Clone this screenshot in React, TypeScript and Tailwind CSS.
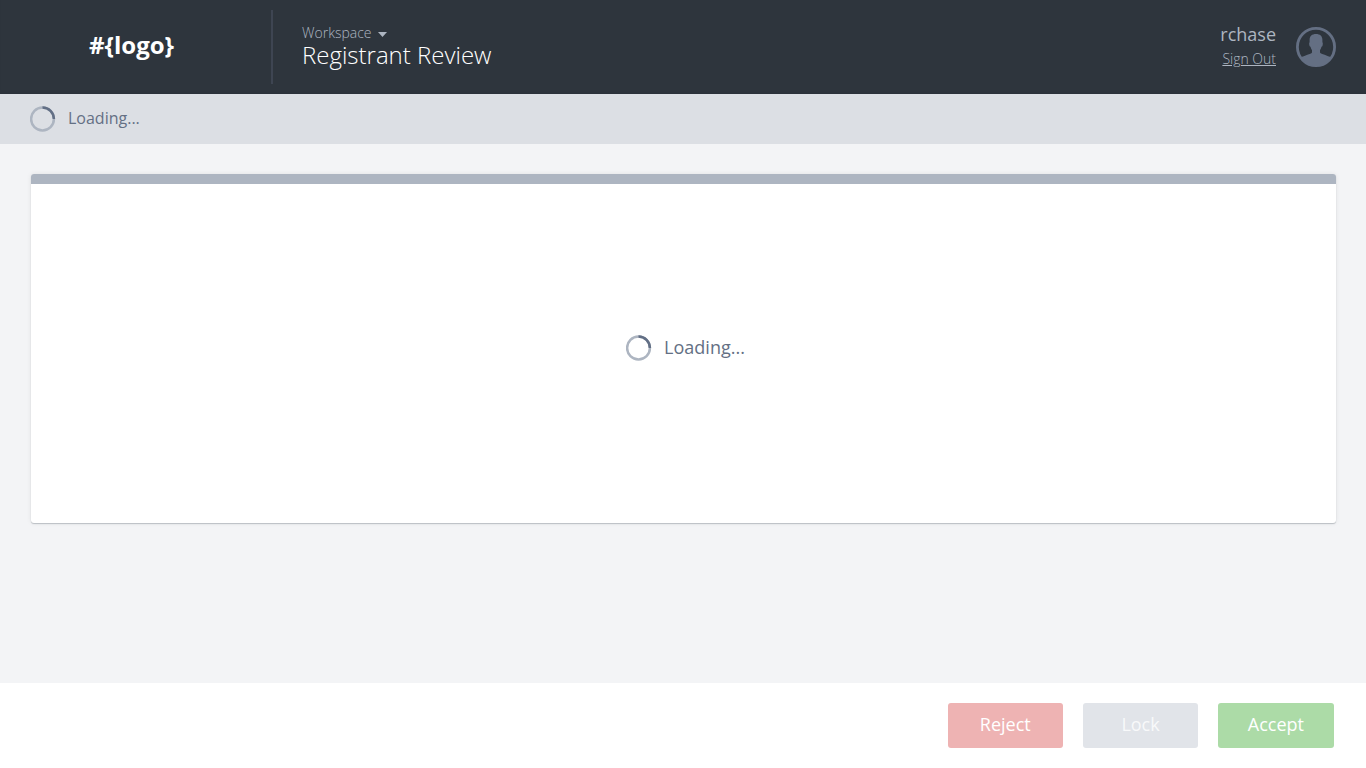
function Spinner() {
  return (
    <svg className="block size-[26px] shrink-0" viewBox="0 0 26 26" fill="none" strokeWidth="2.5">
      <circle cx="12.5" cy="13" r="11.4" stroke="#adb5c1" />
      <path d="M12.5 1.6A11.4 11.4 0 0 1 23.9 13" stroke="#626f85" />
    </svg>
  );
}

function Avatar() {
  return (
    <svg className="block size-10 shrink-0" viewBox="0 0 40 40" fill="#646f83">
      <circle cx="20" cy="20" r="18.6" fill="none" stroke="#646f83" strokeWidth="2.8" />
      <path d="M20 7C16 7 13.600 9 13.600 13V15.300C13 15.500 13.100 17.500 13.500 18.700C13.800 19.500 14.200 19.700 14.600 19.700C14.900 21.400 15.400 22.300 16 23V25.500C15 27.300 8.500 28.300 4.500 30.700C8 36 13.800 39.200 20 39.200S32 36 35.500 30.700C31.500 28.300 25 27.300 24 25.500V23C24.600 22.300 25.100 21.400 25.400 19.700C25.800 19.700 26.200 19.500 26.500 18.700C26.900 17.500 27 15.500 26.400 15.300V13C26.400 9 24 7 20 7Z" />
    </svg>
  );
}

const buttons = [
  { label: "Reject", color: "bg-[#eeb3b3] text-white" },
  { label: "Lock", color: "bg-[#e1e4e9] text-[#f8f9fa]" },
  { label: "Accept", color: "bg-[#acdba7] text-white" },
];

export default function App() {
  return (
    <div className="flex h-screen flex-col overflow-hidden bg-[#f3f4f6] font-['Open_Sans',sans-serif] text-[#647084] antialiased">
      <header className="flex h-[94px] shrink-0 bg-[#2e353d] pr-[30px] shadow-[inset_0_-3px_3px_-2px_#2b303a]">
        <div className="my-2.5 flex w-[273px] items-center border-r-2 border-[#3e4552] pb-[5px] pl-[89px] text-2xl font-bold text-white">
          #{"{logo}"}
        </div>
        <div className="flex flex-col pt-[23px] pl-[29px]">
          <div className="flex items-center gap-1.5 text-sm leading-5 font-light text-[#adb5c1]">
            Workspace
            <svg className="mt-0.5 h-[5px] w-[9px]" viewBox="0 0 9 5">
              <path d="M0 0h9L4.500 5z" fill="#adb5c1" />
            </svg>
          </div>
          <h1 className="text-2xl leading-[24px] font-light text-white">Registrant Review</h1>
        </div>
        <div className="ml-auto flex items-start gap-5">
          <div className="flex flex-col items-end pt-[22px] text-[#adb5c1]">
            <span className="text-lg leading-6">rchase</span>
            <a className="mt-[3px] text-sm leading-5 font-light underline">Sign Out</a>
          </div>
          <div className="pt-[27px]"><Avatar /></div>
        </div>
      </header>
      <div className="flex h-[50px] shrink-0 items-center gap-3 bg-[#dcdfe4] pl-[30px]">
        <Spinner />
        <span className="pb-0.5 text-base">Loading...</span>
      </div>
      <main className="flex-1 pt-[30px] pr-[30px] pl-[31px]">
        <section className="flex h-[349px] flex-col overflow-hidden rounded-[3px] bg-white shadow-[0_1px_1px_#bbbfc4,0_0_5px_rgba(0,0,0,0.08)]">
          <div className="h-2.5 bg-[#adb5c1]" />
          <div className="flex flex-1 items-center justify-center gap-3 pb-[11px] pl-1">
            <Spinner />
            <span className="pb-0.5 text-lg">Loading...</span>
          </div>
        </section>
      </main>
      <footer className="flex h-[85px] shrink-0 items-start justify-end gap-5 bg-white pt-5 pr-[32.5px]">
        {buttons.map((b) => (
          <button key={b.label} className={`h-[45px] w-[115.3px] rounded-[3px] pb-[3px] text-lg ${b.color}`}>
            {b.label}
          </button>
        ))}
      </footer>
    </div>
  );
}
